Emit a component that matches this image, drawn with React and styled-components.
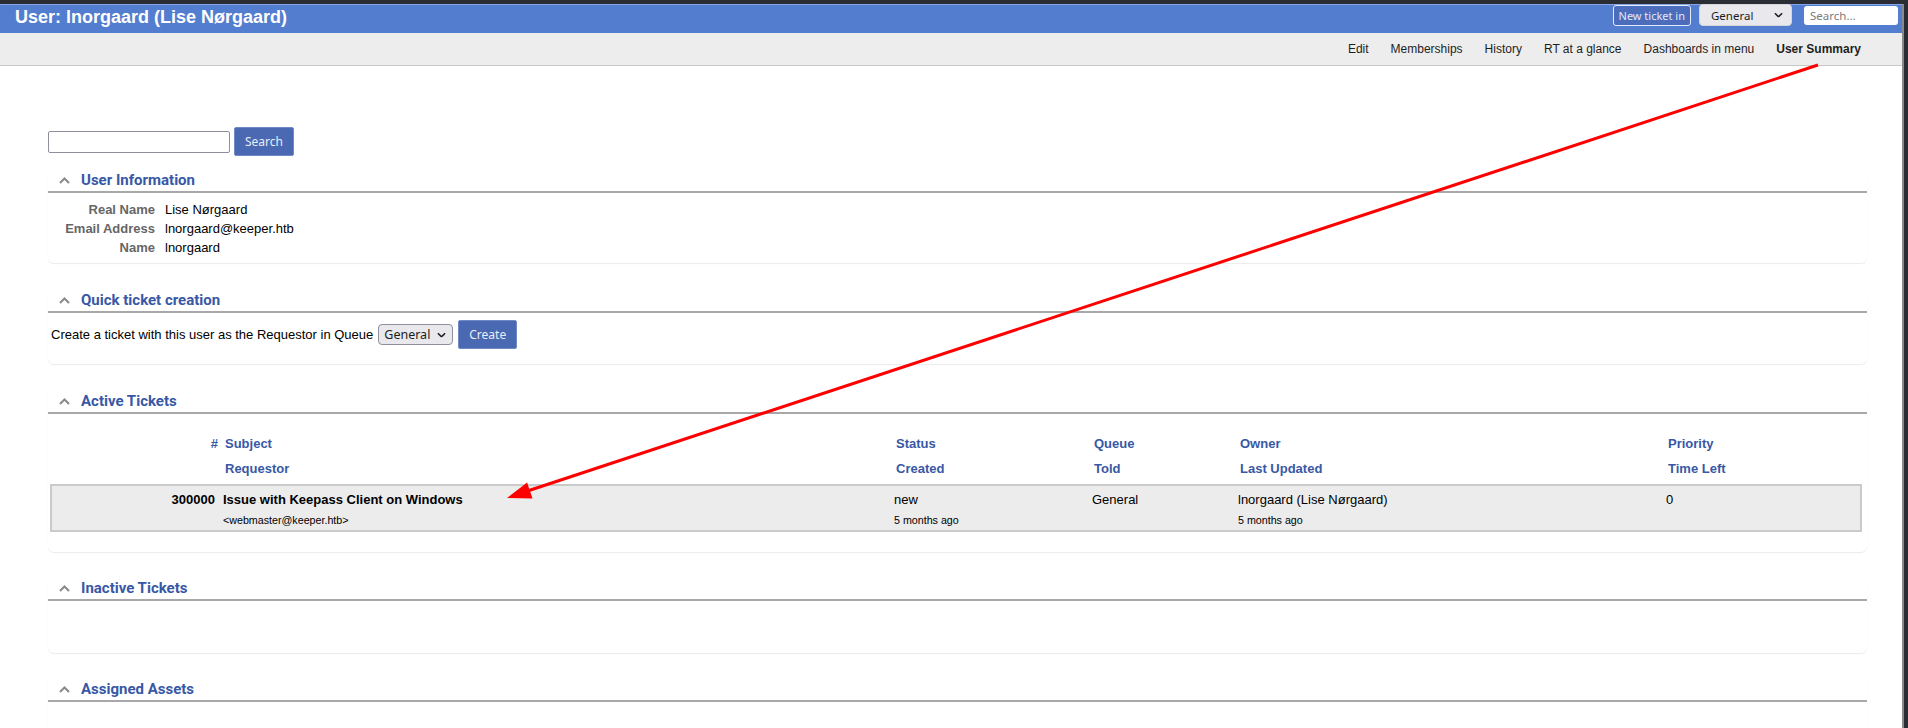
import React from 'react';
import styled, { createGlobalStyle } from 'styled-components';

const Global = createGlobalStyle`
  html, body { margin: 0; padding: 0; background: #2b2d34; }
  body {
    font-family: "Liberation Sans", Arial, sans-serif;
    font-size: 13px;
    color: #000;
  }
  * { box-sizing: border-box; }
`;

const Page = styled.div`
  position: relative;
  width: 1908px;
  height: 728px;
  overflow: hidden;
`;

const Window = styled.div`
  margin: 4px 4px 0 0;
  border-right: 2px solid #8a8a8a;
  background: #fff;
  height: 724px;
  overflow: hidden;
`;

const TopBar = styled.header`
  display: flex;
  justify-content: space-between;
  align-items: flex-start;
  height: 29px;
  background: #537dce;
  border-top: 1px solid #86a6e6;
  padding: 0 4px 0 15px;
`;

const PageTitle = styled.h1`
  margin: 0;
  font-family: "Liberation Sans", Arial, sans-serif;
  font-size: 18px;
  font-weight: bold;
  line-height: 24px;
  color: #fff;
`;

const Controls = styled.div`
  display: flex;
  align-items: center;
  height: 22px;
  margin-top: -1px;
`;

const NewTicketButton = styled.button`
  height: 21px;
  padding: 0 5px;
  border: 1px solid #e4eaf7;
  border-radius: 3px;
  background: #4b6dbb;
  color: #e3e9f6;
  font-family: "Noto Sans", sans-serif;
  font-size: 11px;
  line-height: 19px;
  margin-right: 8px;
`;

const SelectWrap = styled.span`
  position: relative;
  display: inline-flex;
  margin-right: ${p => p.$mr || 0}px;
`;

const Select = styled.select`
  appearance: none;
  width: ${p => p.$w}px;
  height: ${p => p.$h}px;
  padding: 0 0 0 ${p => p.$pl}px;
  border: 1px solid ${p => p.$border};
  border-radius: 4px;
  background: #e9e9ed;
  color: #1c1c1c;
  font-family: "Noto Sans", sans-serif;
  font-size: ${p => p.$fs}px;
`;

const Chevron = styled.svg`
  position: absolute;
  top: 50%;
  right: ${p => p.$r}px;
  transform: translateY(-50%);
  pointer-events: none;
`;

const TopSearch = styled.input`
  width: 94px;
  height: 19px;
  border: none;
  border-radius: 3px;
  background: #fff;
  padding: 0 6px;
  font-family: "Noto Sans", sans-serif;
  font-size: 11.5px;
  &::placeholder { color: #7b7b7b; }
`;

const Nav = styled.nav`
  display: flex;
  justify-content: flex-end;
  height: 33px;
  background: #ededed;
  border-bottom: 1px solid #c8c8c8;
  padding-right: 30px;
`;

const NavItem = styled.a`
  padding: 0 11px;
  line-height: 33px;
  font-size: 12px;
  color: #1e1e1e;
  font-weight: ${p => (p.$active ? 'bold' : 'normal')};
  text-decoration: none;
`;

const Main = styled.main`
  padding: 61px 35px 0 48px;
`;

const SearchForm = styled.form`
  display: flex;
  align-items: center;
  gap: 4px;
`;

const SearchInput = styled.input`
  width: 182px;
  height: 22px;
  border: 1px solid #8f8f9d;
  border-radius: 2px;
`;

const Button = styled.button`
  height: 29px;
  padding: 0 10px;
  border: 1px solid #6f8ac6;
  border-radius: 2px;
  background: #4a69b2;
  color: #e8edf7;
  font-family: "Noto Sans", sans-serif;
  font-size: 12px;
`;

const Card = styled.section`
  margin-top: ${p => p.$gap}px;
  border-radius: 0 0 6px 6px;
  box-shadow: 0 1px 1px rgba(0, 0, 0, 0.08);
`;

const TitleBar = styled.div`
  display: flex;
  align-items: center;
  gap: 11px;
  height: 24px;
  padding-left: 11px;
  border-bottom: 2px solid #a8a8a8;
`;

const TitleText = styled.h2`
  margin: 0;
  font-family: Roboto, "Liberation Sans", sans-serif;
  font-weight: 700;
  font-size: 15px;
  line-height: 22px;
  color: #3858a6;
`;

const Body = styled.div`
  padding: ${p => p.$pad};
  min-height: ${p => p.$minH || 0}px;
`;

const Details = styled.div`
  display: grid;
  grid-template-columns: 107px 1fr;
  column-gap: 10px;
  line-height: 19px;
`;

const Label = styled.div`
  text-align: right;
  font-weight: bold;
  color: #666;
`;

const Value = styled.div`
  color: #000;
`;

const QuickRow = styled.div`
  display: flex;
  align-items: center;
  gap: 5px;
  padding-left: 3px;
`;

const Table = styled.div`
  margin: 0 5px 0 2px;
`;

const HeadRow = styled.div`
  display: grid;
  grid-template-columns: 170px 671px 198px 146px 428px 1fr;
  height: 25px;
  align-items: center;
`;

const HeadCell = styled.div`
  font-weight: bold;
  color: #3858a6;
  text-align: ${p => (p.$right ? 'right' : 'left')};
  padding: ${p => (p.$right ? '0 2px 0 0' : '0 0 0 5px')};
`;

const TicketRow = styled.div`
  margin-top: 3px;
  border: 2px solid #cacaca;
  background: #ececec;
  padding: 4px 0 3px;
`;

const DataLine = styled.div`
  display: grid;
  grid-template-columns: 170px 671px 198px 146px 428px 1fr;
  line-height: ${p => p.$lh}px;
  margin-top: ${p => p.$mt || 0}px;
  font-size: ${p => p.$fs}px;
`;

const DataCell = styled.div`
  font-weight: ${p => (p.$bold ? 'bold' : 'normal')};
  text-align: ${p => (p.$right ? 'right' : 'left')};
  padding: ${p => (p.$right ? '0 7px 0 0' : '0 0 0 1px')};
  white-space: nowrap;
`;

const Arrow = styled.svg`
  position: absolute;
  left: 0;
  top: 0;
  pointer-events: none;
`;

const ChevronDown = ({ r, size = 9 }) => (
  <Chevron $r={r} width={size} height={size * 0.6} viewBox="0 0 10 6">
    <path d="M1 1 L5 5 L9 1" fill="none" stroke="#222" strokeWidth="1.8" />
  </Chevron>
);

const CollapseIcon = () => (
  <svg width="11" height="7" viewBox="0 0 11 7">
    <path d="M1 6 L5.5 1.5 L10 6" fill="none" stroke="#8a8a8a" strokeWidth="2" />
  </svg>
);

const Section = ({ title, gap = 26, children, pad = '0', minH }) => (
  <Card $gap={gap}>
    <TitleBar>
      <CollapseIcon />
      <TitleText>{title}</TitleText>
    </TitleBar>
    <Body $pad={pad} $minH={minH}>{children}</Body>
  </Card>
);

const navItems = ['Edit', 'Memberships', 'History', 'RT at a glance', 'Dashboards in menu', 'User Summary'];

export default function App() {
  return (
    <Page>
      <Global />
      <Window>
        <TopBar>
          <PageTitle>User: lnorgaard (Lise Nørgaard)</PageTitle>
          <Controls>
            <NewTicketButton>New ticket in</NewTicketButton>
            <SelectWrap $mr={12}>
              <Select $w={93} $h={22} $pl={11} $fs={11.5} $border="#d5d5dc" defaultValue="General">
                <option>General</option>
              </Select>
              <ChevronDown r={9} />
            </SelectWrap>
            <TopSearch placeholder="Search..." />
          </Controls>
        </TopBar>
        <Nav>
          {navItems.map(n => (
            <NavItem key={n} $active={n === 'User Summary'}>{n}</NavItem>
          ))}
        </Nav>
        <Main>
          <SearchForm>
            <SearchInput />
            <Button type="button">Search</Button>
          </SearchForm>

          <Section title="User Information" gap={13} pad="7px 0 6px">
            <Details>
              <Label>Real Name</Label>
              <Value>Lise Nørgaard</Value>
              <Label>Email Address</Label>
              <Value>lnorgaard@keeper.htb</Value>
              <Label>Name</Label>
              <Value>lnorgaard</Value>
            </Details>
          </Section>

          <Section title="Quick ticket creation" pad="7px 0 15px">
            <QuickRow>
              <span>Create a ticket with this user as the Requestor in Queue</span>
              <SelectWrap>
                <Select $w={75} $h={21} $pl={5} $fs={12.5} $border="#8f8f9d" defaultValue="General">
                  <option>General</option>
                </Select>
                <ChevronDown r={7} />
              </SelectWrap>
              <Button type="button">Create</Button>
            </QuickRow>
          </Section>

          <Section title="Active Tickets" pad="17px 0 20px">
            <Table>
              <HeadRow>
                <HeadCell $right>#</HeadCell>
                <HeadCell>Subject</HeadCell>
                <HeadCell>Status</HeadCell>
                <HeadCell>Queue</HeadCell>
                <HeadCell>Owner</HeadCell>
                <HeadCell>Priority</HeadCell>
              </HeadRow>
              <HeadRow>
                <HeadCell />
                <HeadCell>Requestor</HeadCell>
                <HeadCell>Created</HeadCell>
                <HeadCell>Told</HeadCell>
                <HeadCell>Last Updated</HeadCell>
                <HeadCell>Time Left</HeadCell>
              </HeadRow>
              <TicketRow>
                <DataLine $lh={20} $fs={13}>
                  <DataCell $right $bold>300000</DataCell>
                  <DataCell $bold>Issue with Keepass Client on Windows</DataCell>
                  <DataCell>new</DataCell>
                  <DataCell>General</DataCell>
                  <DataCell>lnorgaard (Lise Nørgaard)</DataCell>
                  <DataCell>0</DataCell>
                </DataLine>
                <DataLine $lh={14} $mt={3} $fs={10.7}>
                  <DataCell />
                  <DataCell>&lt;webmaster@keeper.htb&gt;</DataCell>
                  <DataCell>5 months ago</DataCell>
                  <DataCell />
                  <DataCell>5 months ago</DataCell>
                  <DataCell />
                </DataLine>
              </TicketRow>
            </Table>
          </Section>

          <Section title="Inactive Tickets" gap={25} minH={52} />

          <Section title="Assigned Assets" gap={25} minH={40} />
        </Main>
      </Window>
      <Arrow width="1908" height="728" viewBox="0 0 1908 728">
        <line x1="1818" y1="65" x2="529" y2="490.5" stroke="#ff0000" strokeWidth="3" />
        <polygon points="507,498 532.5,498.6 527.1,482.4" fill="#ff0000" />
      </Arrow>
    </Page>
  );
}
